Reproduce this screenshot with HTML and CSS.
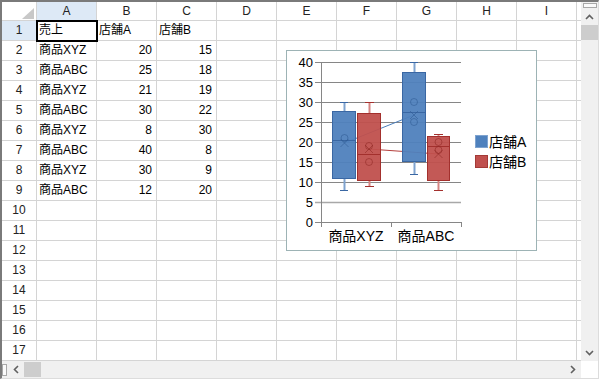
FILE: index.html
```html
<!DOCTYPE html>
<html lang="ja">
<head>
  <meta charset="UTF-8">
  <title>Sheet</title>
  <link rel="stylesheet" href="styles.css">
</head>
<body>

  <div class="sheet">
    <div class="main">

      <!-- Cells -->
      <div class="grid">
        <div class="row head">
          <div class="corner"></div><div class="ch active">A</div><div class="ch">B</div><div class="ch">C</div><div class="ch">D</div><div class="ch">E</div><div class="ch">F</div><div class="ch">G</div><div class="ch">H</div><div class="ch">I</div><div class="ch edge"></div>
        </div>
        <div class="row">
          <div class="rh active">1</div><div class="c sel">売上</div><div class="c">店舗A</div><div class="c">店舗B</div><div class="c"></div><div class="c"></div><div class="c"></div><div class="c"></div><div class="c"></div><div class="c"></div><div class="c edge"></div>
        </div>
        <div class="row">
          <div class="rh">2</div><div class="c">商品XYZ</div><div class="c num">20</div><div class="c num">15</div><div class="c"></div><div class="c"></div><div class="c"></div><div class="c"></div><div class="c"></div><div class="c"></div><div class="c edge"></div>
        </div>
        <div class="row">
          <div class="rh">3</div><div class="c">商品ABC</div><div class="c num">25</div><div class="c num">18</div><div class="c"></div><div class="c"></div><div class="c"></div><div class="c"></div><div class="c"></div><div class="c"></div><div class="c edge"></div>
        </div>
        <div class="row">
          <div class="rh">4</div><div class="c">商品XYZ</div><div class="c num">21</div><div class="c num">19</div><div class="c"></div><div class="c"></div><div class="c"></div><div class="c"></div><div class="c"></div><div class="c"></div><div class="c edge"></div>
        </div>
        <div class="row">
          <div class="rh">5</div><div class="c">商品ABC</div><div class="c num">30</div><div class="c num">22</div><div class="c"></div><div class="c"></div><div class="c"></div><div class="c"></div><div class="c"></div><div class="c"></div><div class="c edge"></div>
        </div>
        <div class="row">
          <div class="rh">6</div><div class="c">商品XYZ</div><div class="c num">8</div><div class="c num">30</div><div class="c"></div><div class="c"></div><div class="c"></div><div class="c"></div><div class="c"></div><div class="c"></div><div class="c edge"></div>
        </div>
        <div class="row">
          <div class="rh">7</div><div class="c">商品ABC</div><div class="c num">40</div><div class="c num">8</div><div class="c"></div><div class="c"></div><div class="c"></div><div class="c"></div><div class="c"></div><div class="c"></div><div class="c edge"></div>
        </div>
        <div class="row">
          <div class="rh">8</div><div class="c">商品XYZ</div><div class="c num">30</div><div class="c num">9</div><div class="c"></div><div class="c"></div><div class="c"></div><div class="c"></div><div class="c"></div><div class="c"></div><div class="c edge"></div>
        </div>
        <div class="row">
          <div class="rh">9</div><div class="c">商品ABC</div><div class="c num">12</div><div class="c num">20</div><div class="c"></div><div class="c"></div><div class="c"></div><div class="c"></div><div class="c"></div><div class="c"></div><div class="c edge"></div>
        </div>
        <div class="row">
          <div class="rh">10</div><div class="c"></div><div class="c"></div><div class="c"></div><div class="c"></div><div class="c"></div><div class="c"></div><div class="c"></div><div class="c"></div><div class="c"></div><div class="c edge"></div>
        </div>
        <div class="row">
          <div class="rh">11</div><div class="c"></div><div class="c"></div><div class="c"></div><div class="c"></div><div class="c"></div><div class="c"></div><div class="c"></div><div class="c"></div><div class="c"></div><div class="c edge"></div>
        </div>
        <div class="row">
          <div class="rh">12</div><div class="c"></div><div class="c"></div><div class="c"></div><div class="c"></div><div class="c"></div><div class="c"></div><div class="c"></div><div class="c"></div><div class="c"></div><div class="c edge"></div>
        </div>
        <div class="row">
          <div class="rh">13</div><div class="c"></div><div class="c"></div><div class="c"></div><div class="c"></div><div class="c"></div><div class="c"></div><div class="c"></div><div class="c"></div><div class="c"></div><div class="c edge"></div>
        </div>
        <div class="row">
          <div class="rh">14</div><div class="c"></div><div class="c"></div><div class="c"></div><div class="c"></div><div class="c"></div><div class="c"></div><div class="c"></div><div class="c"></div><div class="c"></div><div class="c edge"></div>
        </div>
        <div class="row">
          <div class="rh">15</div><div class="c"></div><div class="c"></div><div class="c"></div><div class="c"></div><div class="c"></div><div class="c"></div><div class="c"></div><div class="c"></div><div class="c"></div><div class="c edge"></div>
        </div>
        <div class="row">
          <div class="rh">16</div><div class="c"></div><div class="c"></div><div class="c"></div><div class="c"></div><div class="c"></div><div class="c"></div><div class="c"></div><div class="c"></div><div class="c"></div><div class="c edge"></div>
        </div>
        <div class="row">
          <div class="rh">17</div><div class="c"></div><div class="c"></div><div class="c"></div><div class="c"></div><div class="c"></div><div class="c"></div><div class="c"></div><div class="c"></div><div class="c"></div><div class="c edge"></div>
        </div>

        <!-- Box and whisker chart floating over the sheet -->
        <svg class="chart" width="251" height="201" viewBox="0 0 251 201">
          <rect x="0.5" y="0.5" width="250" height="200" fill="#fff" stroke="#9db3b5"/>

          <!-- gridlines -->
          <g stroke="#868686" stroke-width="1">
            <line x1="29" y1="12.5" x2="175" y2="12.5"/>
            <line x1="29" y1="32.5" x2="175" y2="32.5"/>
            <line x1="29" y1="52.5" x2="175" y2="52.5"/>
            <line x1="29" y1="72.5" x2="175" y2="72.5"/>
            <line x1="29" y1="92.5" x2="175" y2="92.5"/>
            <line x1="29" y1="112.5" x2="175" y2="112.5"/>
            <line x1="29" y1="132.5" x2="175" y2="132.5"/>
            <line x1="29" y1="152.5" x2="175" y2="152.5" stroke="#a8a8a8" stroke-width="1.5"/>
            <line x1="35.5" y1="12" x2="35.5" y2="177"/>
            <line x1="29" y1="172.5" x2="175" y2="172.5"/>
            <line x1="105.5" y1="172" x2="105.5" y2="177"/>
            <line x1="175.5" y1="172" x2="175.5" y2="177"/>
          </g>

          <g class="ylab" text-anchor="end">
            <text x="27" y="17">40</text>
            <text x="27" y="37">35</text>
            <text x="27" y="57">30</text>
            <text x="27" y="77">25</text>
            <text x="27" y="97">20</text>
            <text x="27" y="117">15</text>
            <text x="27" y="137">10</text>
            <text x="27" y="157">5</text>
            <text x="27" y="177">0</text>
          </g>

          <g class="cat" text-anchor="middle">
            <text x="70" y="191">商品XYZ</text>
            <text x="140" y="191">商品ABC</text>
          </g>

          <!-- mean lines -->
          <line x1="58.5" y1="93" x2="128" y2="65" stroke="#4a7ebb" stroke-width="1"/>
          <line x1="83" y1="99" x2="152.5" y2="104" stroke="#b5403d" stroke-width="1"/>

          <!-- 店舗A -->
          <g class="whisk-a">
            <line x1="58.5" y1="52" x2="58.5" y2="61"/>
            <line x1="58.5" y1="129" x2="58.5" y2="140"/>
            <line x1="128.5" y1="12" x2="128.5" y2="22"/>
            <line x1="128.5" y1="112" x2="128.5" y2="124"/>
          </g>
          <g class="cap-a">
            <line x1="54" y1="52.5" x2="62" y2="52.5"/>
            <line x1="54" y1="140.5" x2="62" y2="140.5"/>
            <line x1="124" y1="12.5" x2="132" y2="12.5"/>
            <line x1="124" y1="124.5" x2="132" y2="124.5"/>
          </g>
          <rect class="box-a" x="46.5" y="61.5" width="23" height="67"/>
          <rect class="box-a" x="116.5" y="22.5" width="23" height="89"/>
          <g class="med-a">
            <line x1="47" y1="90.5" x2="69" y2="90.5"/>
            <line x1="117" y1="62.5" x2="139" y2="62.5"/>
          </g>

          <!-- 店舗B -->
          <g class="whisk-b">
            <line x1="83.5" y1="52" x2="83.5" y2="63"/>
            <line x1="83.5" y1="131" x2="83.5" y2="136"/>
            <line x1="152.5" y1="84" x2="152.5" y2="86"/>
            <line x1="152.5" y1="131" x2="152.5" y2="140"/>
          </g>
          <g class="cap-b">
            <line x1="79" y1="52.5" x2="88" y2="52.5"/>
            <line x1="79" y1="136.5" x2="88" y2="136.5"/>
            <line x1="148" y1="84.5" x2="157" y2="84.5"/>
            <line x1="148" y1="140.5" x2="157" y2="140.5"/>
          </g>
          <rect class="box-b" x="71.5" y="63.5" width="23" height="67"/>
          <rect class="box-b" x="141.5" y="86.5" width="22" height="44"/>
          <g class="med-b">
            <line x1="72" y1="104.5" x2="94" y2="104.5"/>
            <line x1="142" y1="96.5" x2="163" y2="96.5"/>
          </g>

          <!-- points and means -->
          <g class="mark-a">
            <circle cx="58.5" cy="88" r="3.5"/>
            <circle cx="128" cy="52" r="3.5"/>
            <circle cx="128" cy="72" r="3.5"/>
            <path d="M54.5 89 L62.5 97 M62.5 89 L54.5 97"/>
            <path d="M124 61 L132 69 M132 61 L124 69"/>
          </g>
          <g class="mark-b">
            <circle cx="83" cy="96" r="3.5"/>
            <circle cx="83" cy="112" r="3.5"/>
            <circle cx="152.5" cy="92" r="3.5"/>
            <circle cx="152.5" cy="100" r="3.5"/>
            <path d="M79 95 L87 103 M87 95 L79 103"/>
            <path d="M148.5 100 L156.5 108 M156.5 100 L148.5 108"/>
          </g>

          <!-- legend -->
          <rect x="189.5" y="85.5" width="12" height="12" fill="#4f81bd" stroke="#7fa3cf"/>
          <text class="leg" x="203" y="97">店舗A</text>
          <rect x="189.5" y="105.5" width="12" height="12" fill="#c0504d" stroke="#a33a37"/>
          <text class="leg" x="203" y="117">店舗B</text>
        </svg>
      </div>

      <!-- Vertical scrollbar -->
      <div class="vscroll">
        <div class="split-v"></div>
        <div class="arrow">
          <svg width="9" height="6" viewBox="0 0 9 6"><polyline points="1,5 4.5,1.5 8,5" fill="none" stroke="#606060" stroke-width="1.6"/></svg>
        </div>
        <div class="thumb-v"></div>
        <div class="track"></div>
        <div class="arrow">
          <svg width="9" height="6" viewBox="0 0 9 6"><polyline points="1,1 4.5,4.5 8,1" fill="none" stroke="#606060" stroke-width="1.6"/></svg>
        </div>
      </div>
    </div>

    <!-- Horizontal scrollbar -->
    <div class="hbar">
      <div class="hscroll">
        <div class="split-h"></div>
        <div class="arrow">
          <svg width="6" height="9" viewBox="0 0 6 9"><polyline points="5,1 1.5,4.5 5,8" fill="none" stroke="#606060" stroke-width="1.6"/></svg>
        </div>
        <div class="thumb-h"></div>
        <div class="track"></div>
        <div class="arrow">
          <svg width="6" height="9" viewBox="0 0 6 9"><polyline points="1,1 4.5,4.5 1,8" fill="none" stroke="#606060" stroke-width="1.6"/></svg>
        </div>
      </div>
      <div class="corner-box"></div>
    </div>
  </div>

</body>
</html>
```

FILE: styles.css
```css
/* General */
body {
  margin: 0;
  font-family: "Liberation Sans", "Noto Sans CJK JP", sans-serif;
  font-size: 12px;
  color: #000;
  background-color: #fff;
}

.sheet {
  width: 599px;
  height: 379px;
  box-sizing: border-box;
  border-style: solid;
  border-width: 2px 1px 1px 2px;
  border-color: #7a7a7a #dcdcdc #dcdcdc #7a7a7a;
  display: flex;
  flex-direction: column;
}

.main {
  display: flex;
  height: 359px;
}

/* Cell grid */
.grid {
  position: relative;
  width: 579px;
  overflow: hidden;
}

.row {
  display: grid;
  grid-template-columns: 35px repeat(9, 60px) 4px;
  height: 20px;
}

.row.head {
  height: 19px;
}

.row > div {
  box-sizing: border-box;
  border-right: 1px solid #d4d4d4;
  border-bottom: 1px solid #d4d4d4;
  padding: 0 2px;
  line-height: 19px;
  white-space: nowrap;
  overflow: hidden;
}

.row.head > div {
  line-height: 18px;
}

.row > .edge {
  border-right: none;
}

.ch,
.rh {
  text-align: center;
  color: #222;
}

.active {
  background-color: #dde9f6;
}

.num {
  text-align: right;
  padding-right: 4px !important;
}

.corner {
  position: relative;
}

.corner::after {
  content: "";
  position: absolute;
  right: 2px;
  bottom: 1px;
  width: 12px;
  height: 11px;
  background-color: #c8c8c8;
  clip-path: polygon(100% 0, 100% 100%, 0 100%);
}

/* Active cell frame */
.row > .sel {
  position: relative;
  overflow: visible;
}

.sel::after {
  content: "";
  position: absolute;
  left: -1px;
  top: -1px;
  right: -2px;
  bottom: -2px;
  border: 2px solid #000;
}

/* Chart */
.chart {
  position: absolute;
  left: 284px;
  top: 48px;
}

.chart text {
  font-family: "Liberation Sans", "Noto Sans CJK JP", sans-serif;
  fill: #000;
}

.ylab {
  font-size: 13px;
}

.cat,
.leg {
  font-size: 14px;
}

.box-a {
  fill: #4f81bd;
  fill-opacity: 0.95;
  stroke: #3a67a3;
}

.box-b {
  fill: #c0504d;
  fill-opacity: 0.95;
  stroke: #a3302d;
}

.whisk-a line {
  stroke: #7fa3cf;
  stroke-width: 2;
}

.whisk-b line {
  stroke: #d58583;
  stroke-width: 2;
}

.cap-a line,
.med-a line {
  stroke: #3a67a3;
  stroke-width: 1;
}

.cap-b line,
.med-b line {
  stroke: #a3302d;
  stroke-width: 1;
}

.mark-a circle,
.mark-a path {
  fill: none;
  stroke: #2e5a92;
  stroke-opacity: 0.55;
}

.mark-b circle,
.mark-b path {
  fill: none;
  stroke: #8e2623;
  stroke-opacity: 0.55;
}

/* Scrollbars */
.vscroll {
  width: 17px;
  background-color: #f0f0f0;
  display: flex;
  flex-direction: column;
  align-items: center;
}

.split-v {
  width: 12px;
  height: 3px;
  border: 1px solid #a8a8a8;
  background-color: #fafafa;
  margin-top: 1px;
}

.arrow {
  width: 17px;
  height: 17px;
  display: flex;
  align-items: center;
  justify-content: center;
  flex-shrink: 0;
}

.vscroll .arrow:first-of-type {
  margin-top: 2px;
}

.thumb-v {
  width: 17px;
  height: 15px;
  background-color: #cdcdcd;
}

.track {
  flex: 1;
}

.hbar {
  display: flex;
  height: 17px;
}

.hscroll {
  width: 579px;
  background-color: #f0f0f0;
  display: flex;
  align-items: center;
}

.split-h {
  width: 3px;
  height: 10px;
  border: 1px solid #a8a8a8;
  background-color: #fafafa;
}

.thumb-h {
  width: 17px;
  height: 15px;
  background-color: #cdcdcd;
}

.corner-box {
  width: 17px;
  background-color: #fff;
}
```
